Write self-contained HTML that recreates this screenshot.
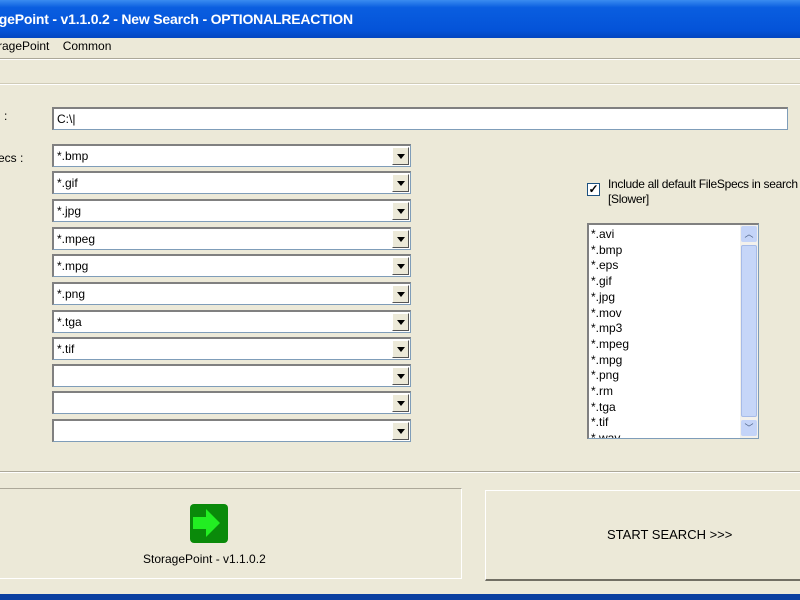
<html><head><style>
body{margin:0;width:800px;height:600px;background:#ece9d8;position:relative;overflow:hidden;font-family:"Liberation Sans",sans-serif;font-size:12px;color:#000}
.a{position:absolute}
.tb{left:0;top:0;width:800px;height:38px;background:linear-gradient(#3a8cf0,#0a5ee0 20%,#0453d8 80%,#0346c0);color:#fff;font-weight:bold;font-size:14px}
.in{background:#fff;border:1px solid #7f9db9;box-sizing:border-box;border-top:2px solid #808080;border-left:2px solid #808080}
.cb{left:52px;width:359px;height:23px}
.cb span{position:absolute;left:3px;top:3px;font-size:12px}
.dd{position:absolute;right:1px;top:1px;width:17px;height:18px;background:#ece9d8;border:1px solid #fff;border-right-color:#555;border-bottom-color:#555;box-sizing:border-box}
.dd:after{content:"";position:absolute;left:4px;top:6px;border:4px solid transparent;border-top:5px solid #000;border-bottom:0}
.li{line-height:15.7px;font-size:12px}
</style></head><body>
<div class="a tb"><div class="a" style="left:-36px;top:11px;letter-spacing:-0.2px">StoragePoint - v1.1.0.2 - New Search - OPTIONALREACTION</div></div>
<div class="a" style="left:-20px;top:39px;font-size:12px">StoragePoint&nbsp;&nbsp;&nbsp; Common</div>
<div class="a" style="left:0;top:58px;width:800px;border-top:1px solid #aca899;border-bottom:1px solid #fff"></div>
<div class="a" style="left:0;top:83px;width:800px;border-top:1px solid #d0ccb8;border-bottom:1px solid #fff"></div>
<div class="a" style="left:4px;top:109px">:</div>
<div class="a" style="left:-2px;top:151px">ecs :</div>
<div class="a in" style="left:52px;top:107px;width:736px;height:23px"><span class="a" style="left:3px;top:3px">C:\|</span></div>
<div class="a in cb" style="top:144px"><span>*.bmp</span><div class="dd"></div></div>
<div class="a in cb" style="top:171px"><span>*.gif</span><div class="dd"></div></div>
<div class="a in cb" style="top:199px"><span>*.jpg</span><div class="dd"></div></div>
<div class="a in cb" style="top:227px"><span>*.mpeg</span><div class="dd"></div></div>
<div class="a in cb" style="top:254px"><span>*.mpg</span><div class="dd"></div></div>
<div class="a in cb" style="top:282px"><span>*.png</span><div class="dd"></div></div>
<div class="a in cb" style="top:310px"><span>*.tga</span><div class="dd"></div></div>
<div class="a in cb" style="top:337px"><span>*.tif</span><div class="dd"></div></div>
<div class="a in cb" style="top:364px"><div class="dd"></div></div>
<div class="a in cb" style="top:391px"><div class="dd"></div></div>
<div class="a in cb" style="top:419px"><div class="dd"></div></div>
<div class="a" style="left:587px;top:183px;width:13px;height:13px;background:#fff;border:1px solid #1c5180;box-sizing:border-box;font-size:12px;line-height:11px;text-align:center;font-weight:bold">✓</div>
<div class="a" style="left:608px;top:177px;line-height:15px;white-space:nowrap;letter-spacing:-0.3px">Include all default FileSpecs in search<br>[Slower]</div>
<div class="a in" style="left:587px;top:223px;width:172px;height:216px;overflow:hidden">
<div class="li" style="padding-left:2px;margin-top:2px">*.avi<br>*.bmp<br>*.eps<br>*.gif<br>*.jpg<br>*.mov<br>*.mp3<br>*.mpeg<br>*.mpg<br>*.png<br>*.rm<br>*.tga<br>*.tif<br>*.wav</div>
<div class="a" style="right:0;top:0;width:18px;height:214px;background:#f3f1ec">
<div class="a" style="left:1px;top:1px;width:16px;height:16px;background:#c4d4f8;border-radius:2px;text-align:center;font-size:9px;line-height:16px;color:#4d6185">︿</div>
<div class="a" style="left:1px;top:20px;width:16px;height:172px;background:#c6d6f8;border:1px solid #a6bbe8;box-sizing:border-box;border-radius:2px"></div>
<div class="a" style="left:1px;top:195px;width:16px;height:16px;background:#c4d4f8;border-radius:2px;text-align:center;font-size:9px;line-height:16px;color:#4d6185">﹀</div>
</div></div>
<div class="a" style="left:0;top:471px;width:800px;border-top:1px solid #aca899;border-bottom:1px solid #fff"></div>
<div class="a" style="left:-2px;top:488px;width:464px;height:91px;border:1px solid #aca899;border-right-color:#fff;border-bottom-color:#fff;box-sizing:border-box"></div>
<div class="a" style="left:190px;top:504px;width:38px;height:39px;background:#0a8a0a;border-radius:4px"><svg width="38" height="39"><path d="M3 13h13v-8l14 14-14 14v-8H3z" fill="#22ee22"/></svg></div>
<div class="a" style="left:143px;top:552px">StoragePoint - v1.1.0.2</div>
<div class="a" style="left:485px;top:490px;width:320px;height:91px;border:1px solid #fff;border-right-color:#716f64;border-bottom:2px solid #716f64;box-sizing:border-box"></div>
<div class="a" style="left:607px;top:527px;font-size:13px">START SEARCH &gt;&gt;&gt;</div>
<div class="a" style="left:0;top:594px;width:800px;height:6px;background:#0a3fa0"></div>
</body></html>
